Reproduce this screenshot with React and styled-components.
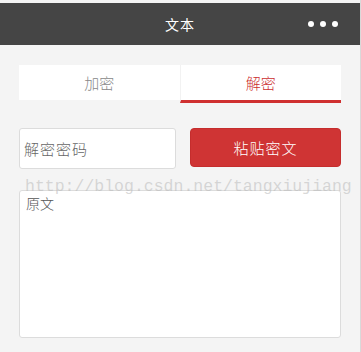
import React, { useState } from "react";
import styled, { createGlobalStyle } from "styled-components";

const GlobalStyle = createGlobalStyle`
  html, body {
    margin: 0;
    padding: 0;
    background: #f4f4f4;
  }
  body {
    font-family: "Noto Sans CJK SC", "Noto Sans", sans-serif;
  }
`;

const Page = styled.div`
  position: relative;
  width: 361px;
  height: 352px;
  box-sizing: border-box;
  padding-top: 3px;
  background: #f4f4f4;
  border-right: 1px solid #d9d9d9;
  overflow: hidden;
`;

const Header = styled.header`
  position: relative;
  height: 42px;
  background: #454545;
  display: flex;
  align-items: center;
  justify-content: center;
`;

const Title = styled.h1`
  margin: 0;
  font-size: 14px;
  font-weight: 400;
  color: #fff;
  letter-spacing: 1px;
`;

const More = styled.div`
  position: absolute;
  right: 22px;
  top: 50%;
  transform: translateY(-50%);
  display: flex;
  gap: 6px;
`;

const Dot = styled.span`
  width: 6px;
  height: 6px;
  border-radius: 50%;
  background: #fff;
`;

const Content = styled.main`
  padding: 20px 19px 0 19px;
`;

const Tabs = styled.div`
  display: flex;
  background: #fff;
  height: 38px;
`;

const Tab = styled.button`
  flex: 1;
  border: none;
  border-left: ${(p) => (p.$first ? "none" : "1px solid #f2f2f2")};
  border-bottom: 3px solid ${(p) => (p.$active ? "#cf3030" : "#f4f4f4")};
  background: #fff;
  padding: 0;
  font-family: inherit;
  font-size: 15px;
  font-weight: 300;
  color: ${(p) => (p.$active ? "#cc2e2e" : "#888")};
  cursor: pointer;
`;

const Row = styled.div`
  display: flex;
  align-items: flex-start;
  gap: 14px;
  margin-top: 25px;
`;

const Input = styled.input`
  width: 157px;
  height: 41px;
  box-sizing: border-box;
  border: 1px solid #dcdcdc;
  border-radius: 3px;
  padding: 0 4px;
  font-family: inherit;
  font-size: 15px;
  font-weight: 300;
  letter-spacing: 1px;
  background: #fff;
  outline: none;
  &::placeholder {
    color: #666;
  }
`;

const PasteButton = styled.button`
  flex: 1;
  height: 39px;
  border: 1px solid #c52d2d;
  border-radius: 4px;
  background: #cf3434;
  color: #fff;
  font-family: inherit;
  font-size: 15px;
  font-weight: 300;
  letter-spacing: 1px;
  cursor: pointer;
`;

const TextArea = styled.textarea`
  display: block;
  margin-top: 21px;
  width: 100%;
  height: 148px;
  box-sizing: border-box;
  border: 1px solid #dcdcdc;
  border-radius: 3px;
  padding: 2px 6px;
  resize: none;
  font-family: inherit;
  font-size: 14px;
  font-weight: 300;
  background: #fff;
  outline: none;
  &::placeholder {
    color: #555;
  }
`;

const Watermark = styled.div`
  position: absolute;
  left: 25px;
  top: 177px;
  font-family: "Liberation Mono", monospace;
  font-size: 16.5px;
  color: rgba(180, 180, 180, 0.5);
  pointer-events: none;
  white-space: nowrap;
`;

export default function App() {
  const [tab, setTab] = useState("decrypt");

  return (
    <>
      <GlobalStyle />
      <Page>
        <Header>
          <Title>文本</Title>
          <More>
            <Dot />
            <Dot />
            <Dot />
          </More>
        </Header>
        <Content>
          <Tabs>
            <Tab $first $active={tab === "encrypt"} onClick={() => setTab("encrypt")}>
              加密
            </Tab>
            <Tab $active={tab === "decrypt"} onClick={() => setTab("decrypt")}>
              解密
            </Tab>
          </Tabs>
          <Row>
            <Input placeholder="解密密码" />
            <PasteButton>粘贴密文</PasteButton>
          </Row>
          <TextArea placeholder="原文" />
        </Content>
        <Watermark>http://blog.csdn.net/tangxiujiang</Watermark>
      </Page>
    </>
  );
}
